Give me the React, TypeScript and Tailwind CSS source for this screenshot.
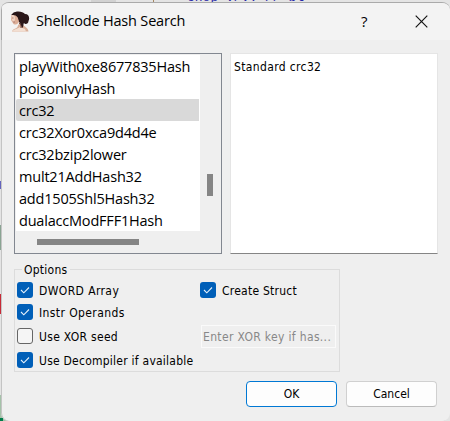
import React from 'react';

const hashes = [
  'playWith0xe8677835Hash',
  'poisonIvyHash',
  'crc32',
  'crc32Xor0xca9d4d4e',
  'crc32bzip2lower',
  'mult21AddHash32',
  'add1505Shl5Hash32',
  'dualaccModFFF1Hash',
];

function Portrait() {
  return (
    <svg width="20" height="21" viewBox="0 0 20 21" className="block shrink-0">
      <path d="M2 20.5 C3 17 8 18 8 14 L12 11 C12 16 18 15 18.5 20.5Z" fill="#d9b09a" />
      <path d="M2.5 20 C6 17 8 18 10 16 L15 18 L16 20.5 L2 20.5Z" fill="#f3dfd2" />
      <path d="M3 2 C6 -0.5 13 0 15 3 C19 3 20 7 18.5 10 C18.5 13 15 14 14 12 C13 13 14 16 12 17 L10 12 L4 6Z" fill="#2b1719" />
      <path d="M1.5 4 C4 2 7 3 8 6 L9 10 C8.5 13 6 14.5 3.5 13 L1 9Z" fill="#dcae97" />
      <path d="M2 4 C4 3 5 5 5 8 L4 12 L2 9Z" fill="#f0d3c2" />
      <path d="M1.5 3.5 C5 0 9 1 10 5 L9 10 C8 5 6 4 1.5 4Z" fill="#251416" />
      <path d="M2 7h1.5M3 11h2" stroke="#925a50" strokeWidth=".7" />
      <path d="M9 12c2 1 2 3 2 5" stroke="#6e4239" strokeWidth="1" fill="none" />
    </svg>
  );
}

function Check({ label, checked = false }: { label: string; checked?: boolean }) {
  return (
    <div className="flex h-4 items-center whitespace-nowrap">
      <span
        className={
          checked
            ? 'mr-1.5 flex size-4 shrink-0 items-center justify-center rounded-[3px] bg-[#005fb8]'
            : 'mr-1.5 size-4 shrink-0 rounded-[3px] border border-[#666] bg-[#f5f5f5]'
        }
      >
        {checked && (
          <svg width="16" height="16" viewBox="0 0 16 16" fill="none">
            <path d="M4 8 L6.8 10.8 L12 5.5" stroke="#e4f0fa" strokeWidth="1.1" />
          </svg>
        )}
      </span>
      <span className="pt-px">{label}</span>
    </div>
  );
}

export default function App() {
  return (
    <div className="relative h-[421px] w-[450px] overflow-hidden bg-[#e4e4e4] font-['DejaVu_Sans_Condensed','DejaVu_Sans',sans-serif] text-[12px] tracking-[0.24px] text-black [font-stretch:condensed]">
      <div className="absolute top-0 left-[91px] h-[3px] w-[25px] bg-[#d2d2d2]" />
      <div className="absolute top-[-9px] left-[187px] font-['Liberation_Mono',monospace] text-[13px] leading-[14px] tracking-normal whitespace-pre text-[#2828a8]">chop v/v: // bl</div>
      <div className="absolute top-0 left-[153px] h-[3px] w-px bg-[#a58762]" />
      <div className="absolute top-[294px] left-0 h-5 w-px bg-[#c72a37]" />
      <div className="absolute top-[181px] left-0 h-2 w-px bg-[#6464bd]" />
      <div className="absolute top-[225px] left-0 h-[25px] w-px bg-[#8aa493]" />
      <div className="absolute top-[395px] left-0 h-[26px] w-2 bg-[#a5c2a9]" />
      <div className="absolute top-[418px] left-0 h-[3px] w-[3px] bg-[#007c4a]" />
      <main className="relative mt-[2px] ml-px flex h-[419px] w-[449px] flex-col overflow-hidden rounded-[8px] border-t border-[#aaa] bg-[#efefef] pl-px shadow-[inset_1px_0_0_#c4c4c4]">
        <header className="-ml-px flex h-[37px] shrink-0 items-center border-l border-[#aaa] bg-[#f3f3f3] pl-2 [font-stretch:normal]">
          <Portrait />
          <h1 className="ml-[6px] w-[160px] pb-px font-['Open_Sans','Noto_Sans',sans-serif] text-[14.5px] leading-5 tracking-[-0.18px] whitespace-nowrap">Shellcode Hash Search</h1>
          <span className="ml-[165px] w-[7px] pb-px font-['Open_Sans',sans-serif] text-[15px] tracking-normal">?</span>
          <svg className="mb-px ml-[47px] shrink-0" width="13" height="13" viewBox="0 0 13 13">
            <path d="M.7.7 12.3 12.3M12.3.7.7 12.3" stroke="#111" strokeWidth="1.15" />
          </svg>
        </header>
        <section className="mt-[13px] ml-3 flex h-[201px] shrink-0">
          <div className="flex w-[208px] flex-col border border-[#828790] pt-px pl-px">
            <div className="flex h-44">
              <div className="w-[184px] bg-white font-['Open_Sans','Noto_Sans',sans-serif] text-[14.5px] tracking-[-0.2px] [font-stretch:normal]">
                {hashes.map((hash) => (
                  <div
                    key={hash}
                    className={`flex h-[22px] w-[183px] items-center rounded-l-[2px] pt-px pl-[3px] leading-[21px] whitespace-nowrap ${hash === 'crc32' ? 'bg-[#d9d9d9]' : ''}`}
                  >
                    <span>{hash}</span>
                  </div>
                ))}
              </div>
              <div className="ml-[7px] flex flex-col pt-[119px]">
                <div className="h-[22px] w-1.5 bg-[#858585]" />
              </div>
            </div>
            <div className="mt-2 ml-[21px] h-1.5 w-[102px] bg-[#858585]" />
          </div>
          <div className="ml-2 w-[208px] border border-[#e5e5e5] border-b-[#858585] bg-white px-[3px] pt-[5px] leading-4 tracking-[0.36px] whitespace-nowrap">Standard crc32</div>
        </section>
        <section className="mt-[15px] ml-3 h-[103px] w-[326px] shrink-0 border border-[#dcdcdc] px-0.5">
          <div className="-mt-2 ml-[5px] h-4 w-[48px] bg-[#efefef] pl-0.5 leading-4">Options</div>
          <div className="mt-1 flex">
            <div className="w-[183px] tracking-[0.4px]"><Check label="DWORD Array" checked /></div>
            <Check label="Create Struct" checked />
          </div>
          <div className="mt-1.5 tracking-[0.4px]"><Check label="Instr Operands" checked /></div>
          <div className="mt-[5px] flex h-[22px] items-center">
            <div className="w-[184px] tracking-[0.3px]"><Check label="Use XOR seed" /></div>
            <div className="h-[23px] w-[135px] border border-[#fafafa] pl-px leading-[22px] tracking-[0.34px] whitespace-nowrap text-[#888]">Enter XOR key if has...</div>
          </div>
          <div className="mt-[5px]"><Check label="Use Decompiler if available" checked /></div>
        </section>
        <footer className="mt-[9px] ml-[244px] flex gap-[9px]">
          <button className="h-[26px] w-[91px] rounded-[4px] border border-[#0078d4] bg-[#fdfdfd] tracking-normal">OK</button>
          <button className="h-[26px] w-[91px] rounded-[4px] border border-[#d0d0d0] border-b-[#bbb] bg-[#fdfdfd] tracking-normal">Cancel</button>
        </footer>
      </main>
    </div>
  );
}
